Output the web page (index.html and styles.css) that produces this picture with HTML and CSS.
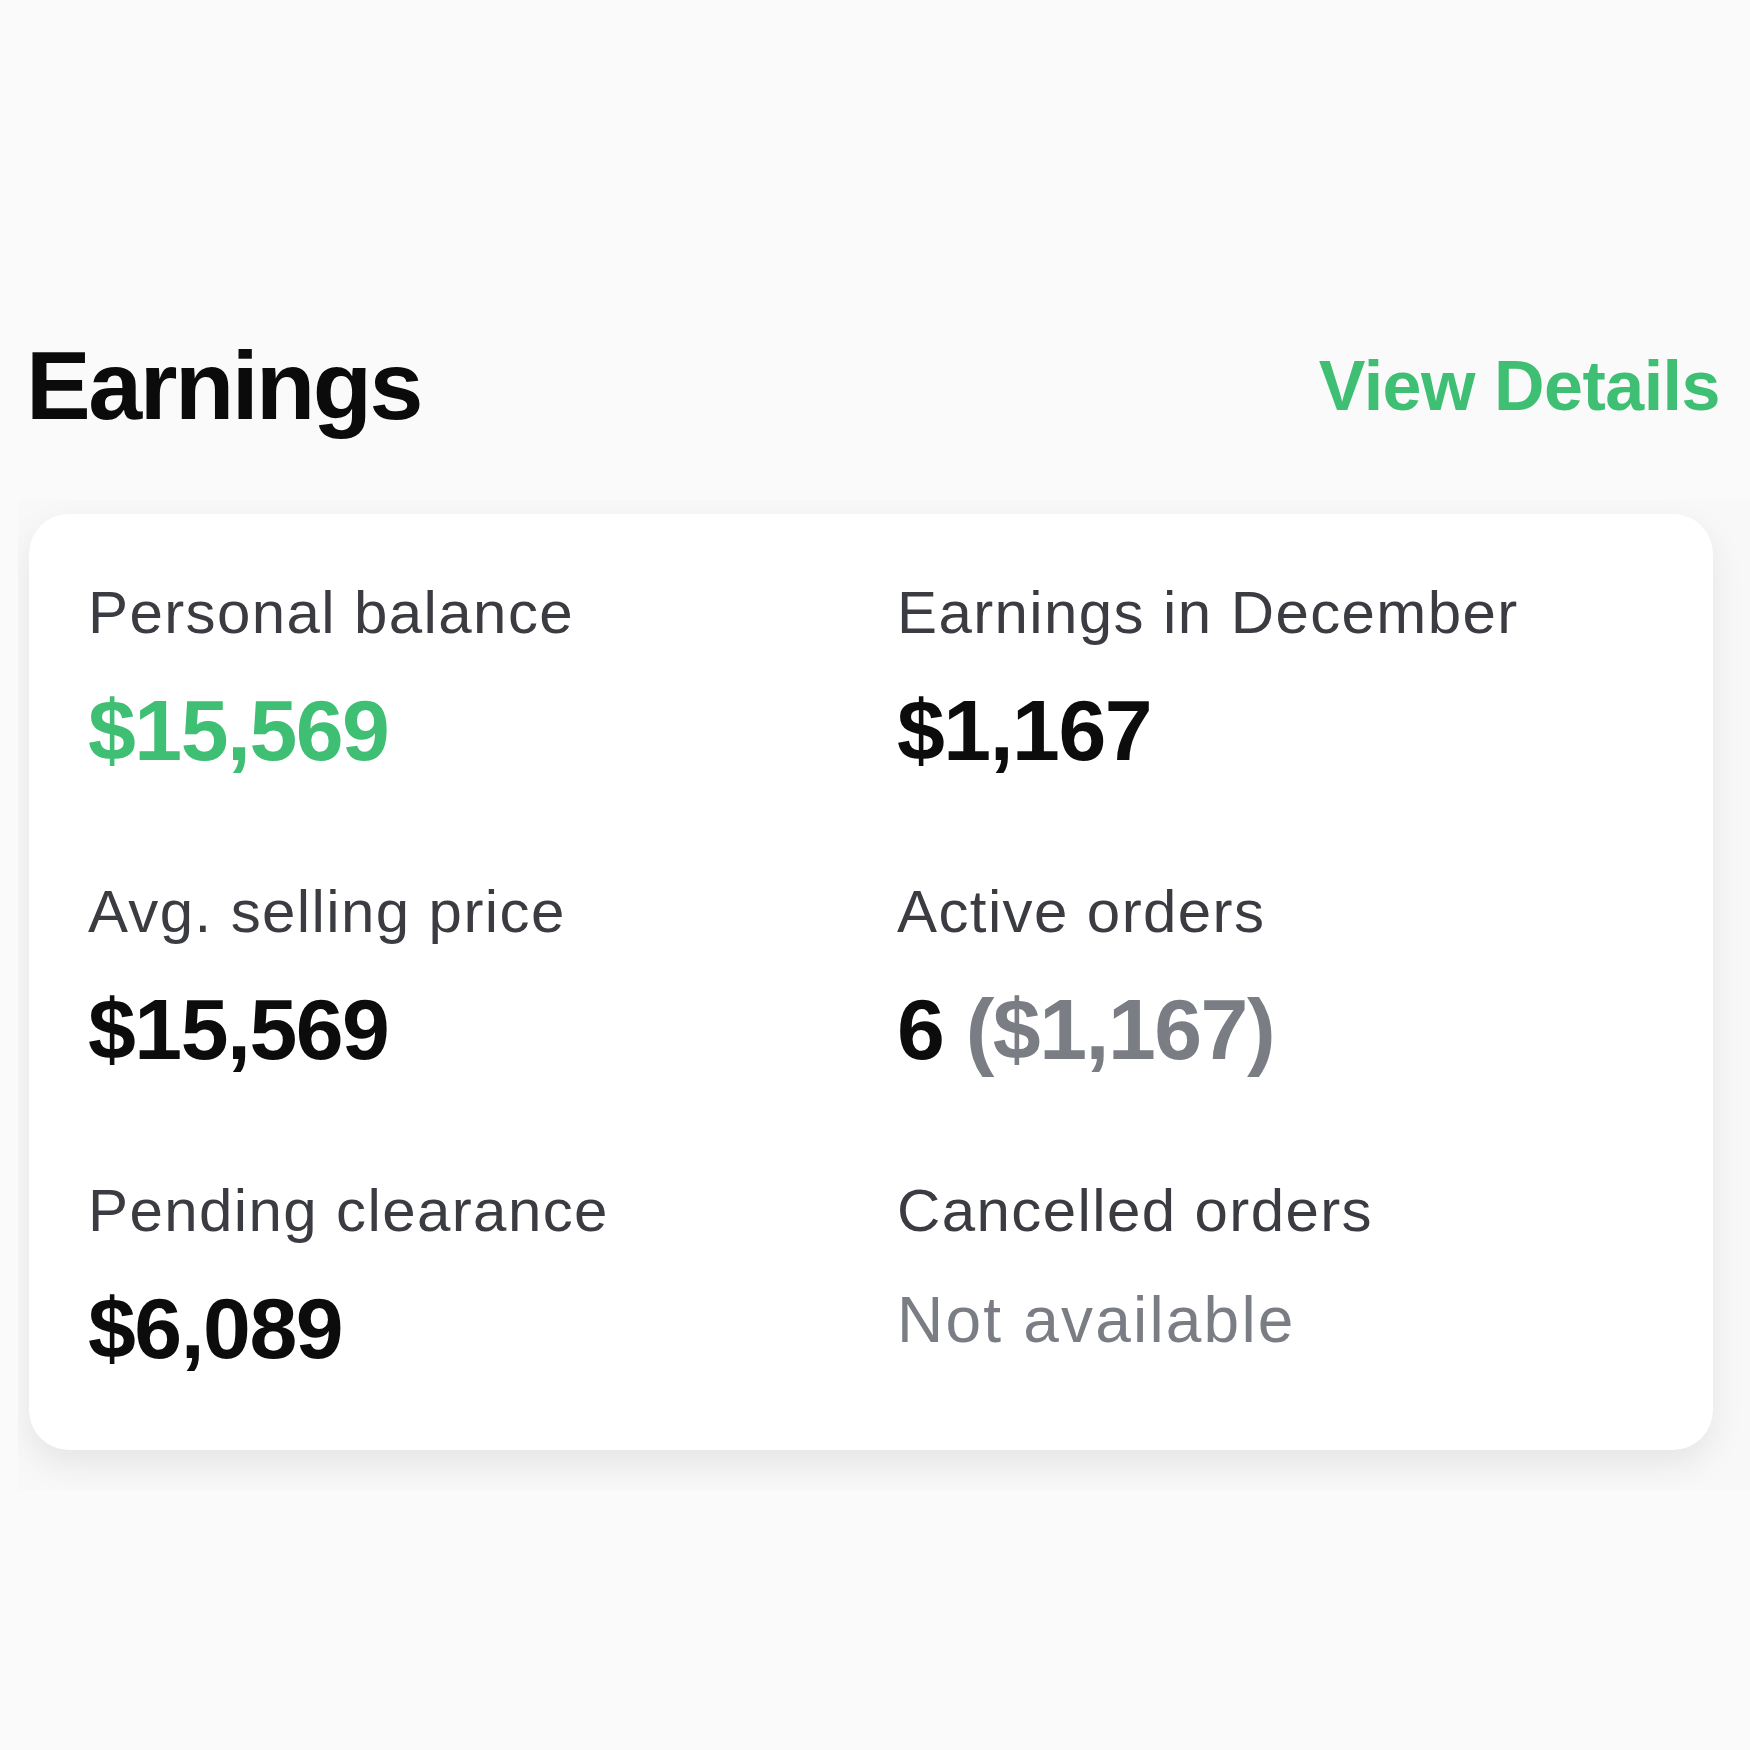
FILE: index.html
```html
<!DOCTYPE html>
<html lang="en">

<head>
    <meta charset="UTF-8">
    <meta name="viewport" content="width=device-width, initial-scale=1.0">
    <title>Earnings</title>
    <link rel="stylesheet" href="styles.css">
</head>

<body>
    <header class="section-head">
        <h1>Earnings</h1>
        <a href="#" class="details-link">View Details</a>
    </header>

    <div class="card-wrap">
        <div class="earnings-card">
            <div class="stat">
                <p class="stat-label">Personal balance</p>
                <p class="stat-value green">$15,569</p>
            </div>
            <div class="stat">
                <p class="stat-label">Earnings in December</p>
                <p class="stat-value">$1,167</p>
            </div>
            <div class="stat">
                <p class="stat-label">Avg. selling price</p>
                <p class="stat-value">$15,569</p>
            </div>
            <div class="stat">
                <p class="stat-label">Active orders</p>
                <p class="stat-value">6 <span class="muted">($1,167)</span></p>
            </div>
            <div class="stat">
                <p class="stat-label">Pending clearance</p>
                <p class="stat-value">$6,089</p>
            </div>
            <div class="stat">
                <p class="stat-label">Cancelled orders</p>
                <p class="stat-value empty">Not available</p>
            </div>
        </div>
    </div>
</body>

</html>
```

FILE: styles.css
```css
/* Reset */
* {
    margin: 0;
    padding: 0;
    box-sizing: border-box;
}

body {
    background: #fafafa;
    color: #0c0c0c;
    font-family: 'Liberation Sans', Arial, sans-serif;
    padding-top: 326px;
    padding-left: 18px;
}

/* Header */
.section-head {
    display: flex;
    justify-content: space-between;
    align-items: center;
    padding-left: 8px;
    padding-right: 30px;
}

.section-head h1 {
    font-size: 97px;
    line-height: 120px;
    font-weight: 700;
    letter-spacing: -2.5px;
    color: #0b0b0b;
}

.details-link {
    font-size: 70px;
    line-height: 120px;
    font-weight: 700;
    letter-spacing: -0.5px;
    color: #3fbf73;
    text-decoration: none;
}

/* Card */
.card-wrap {
    margin-top: 54px;
    padding: 14px 37px 40px 11px;
    background: #f8f8f8;
    overflow: hidden;
}

.earnings-card {
    background: #fff;
    border-radius: 40px;
    box-shadow: 0 14px 34px rgba(0, 0, 0, 0.08);
    padding: 63px 56px 72px 59px;
    display: grid;
    grid-template-columns: 809px 1fr;
    row-gap: 96px;
    align-items: start;
}

.stat-label {
    font-size: 60px;
    line-height: 72px;
    letter-spacing: 1.4px;
    color: #3b3c41;
    margin-bottom: 31px;
}

.stat-value {
    font-size: 86px;
    line-height: 100px;
    font-weight: 700;
    letter-spacing: -1.5px;
    color: #0c0c0c;
}

.stat-value.green {
    color: #3fbf73;
}

.stat-value .muted {
    color: #7b7d85;
}

.stat-value.empty {
    font-size: 64px;
    line-height: 84px;
    font-weight: 400;
    letter-spacing: 2.2px;
    color: #7b7d85;
}
```
